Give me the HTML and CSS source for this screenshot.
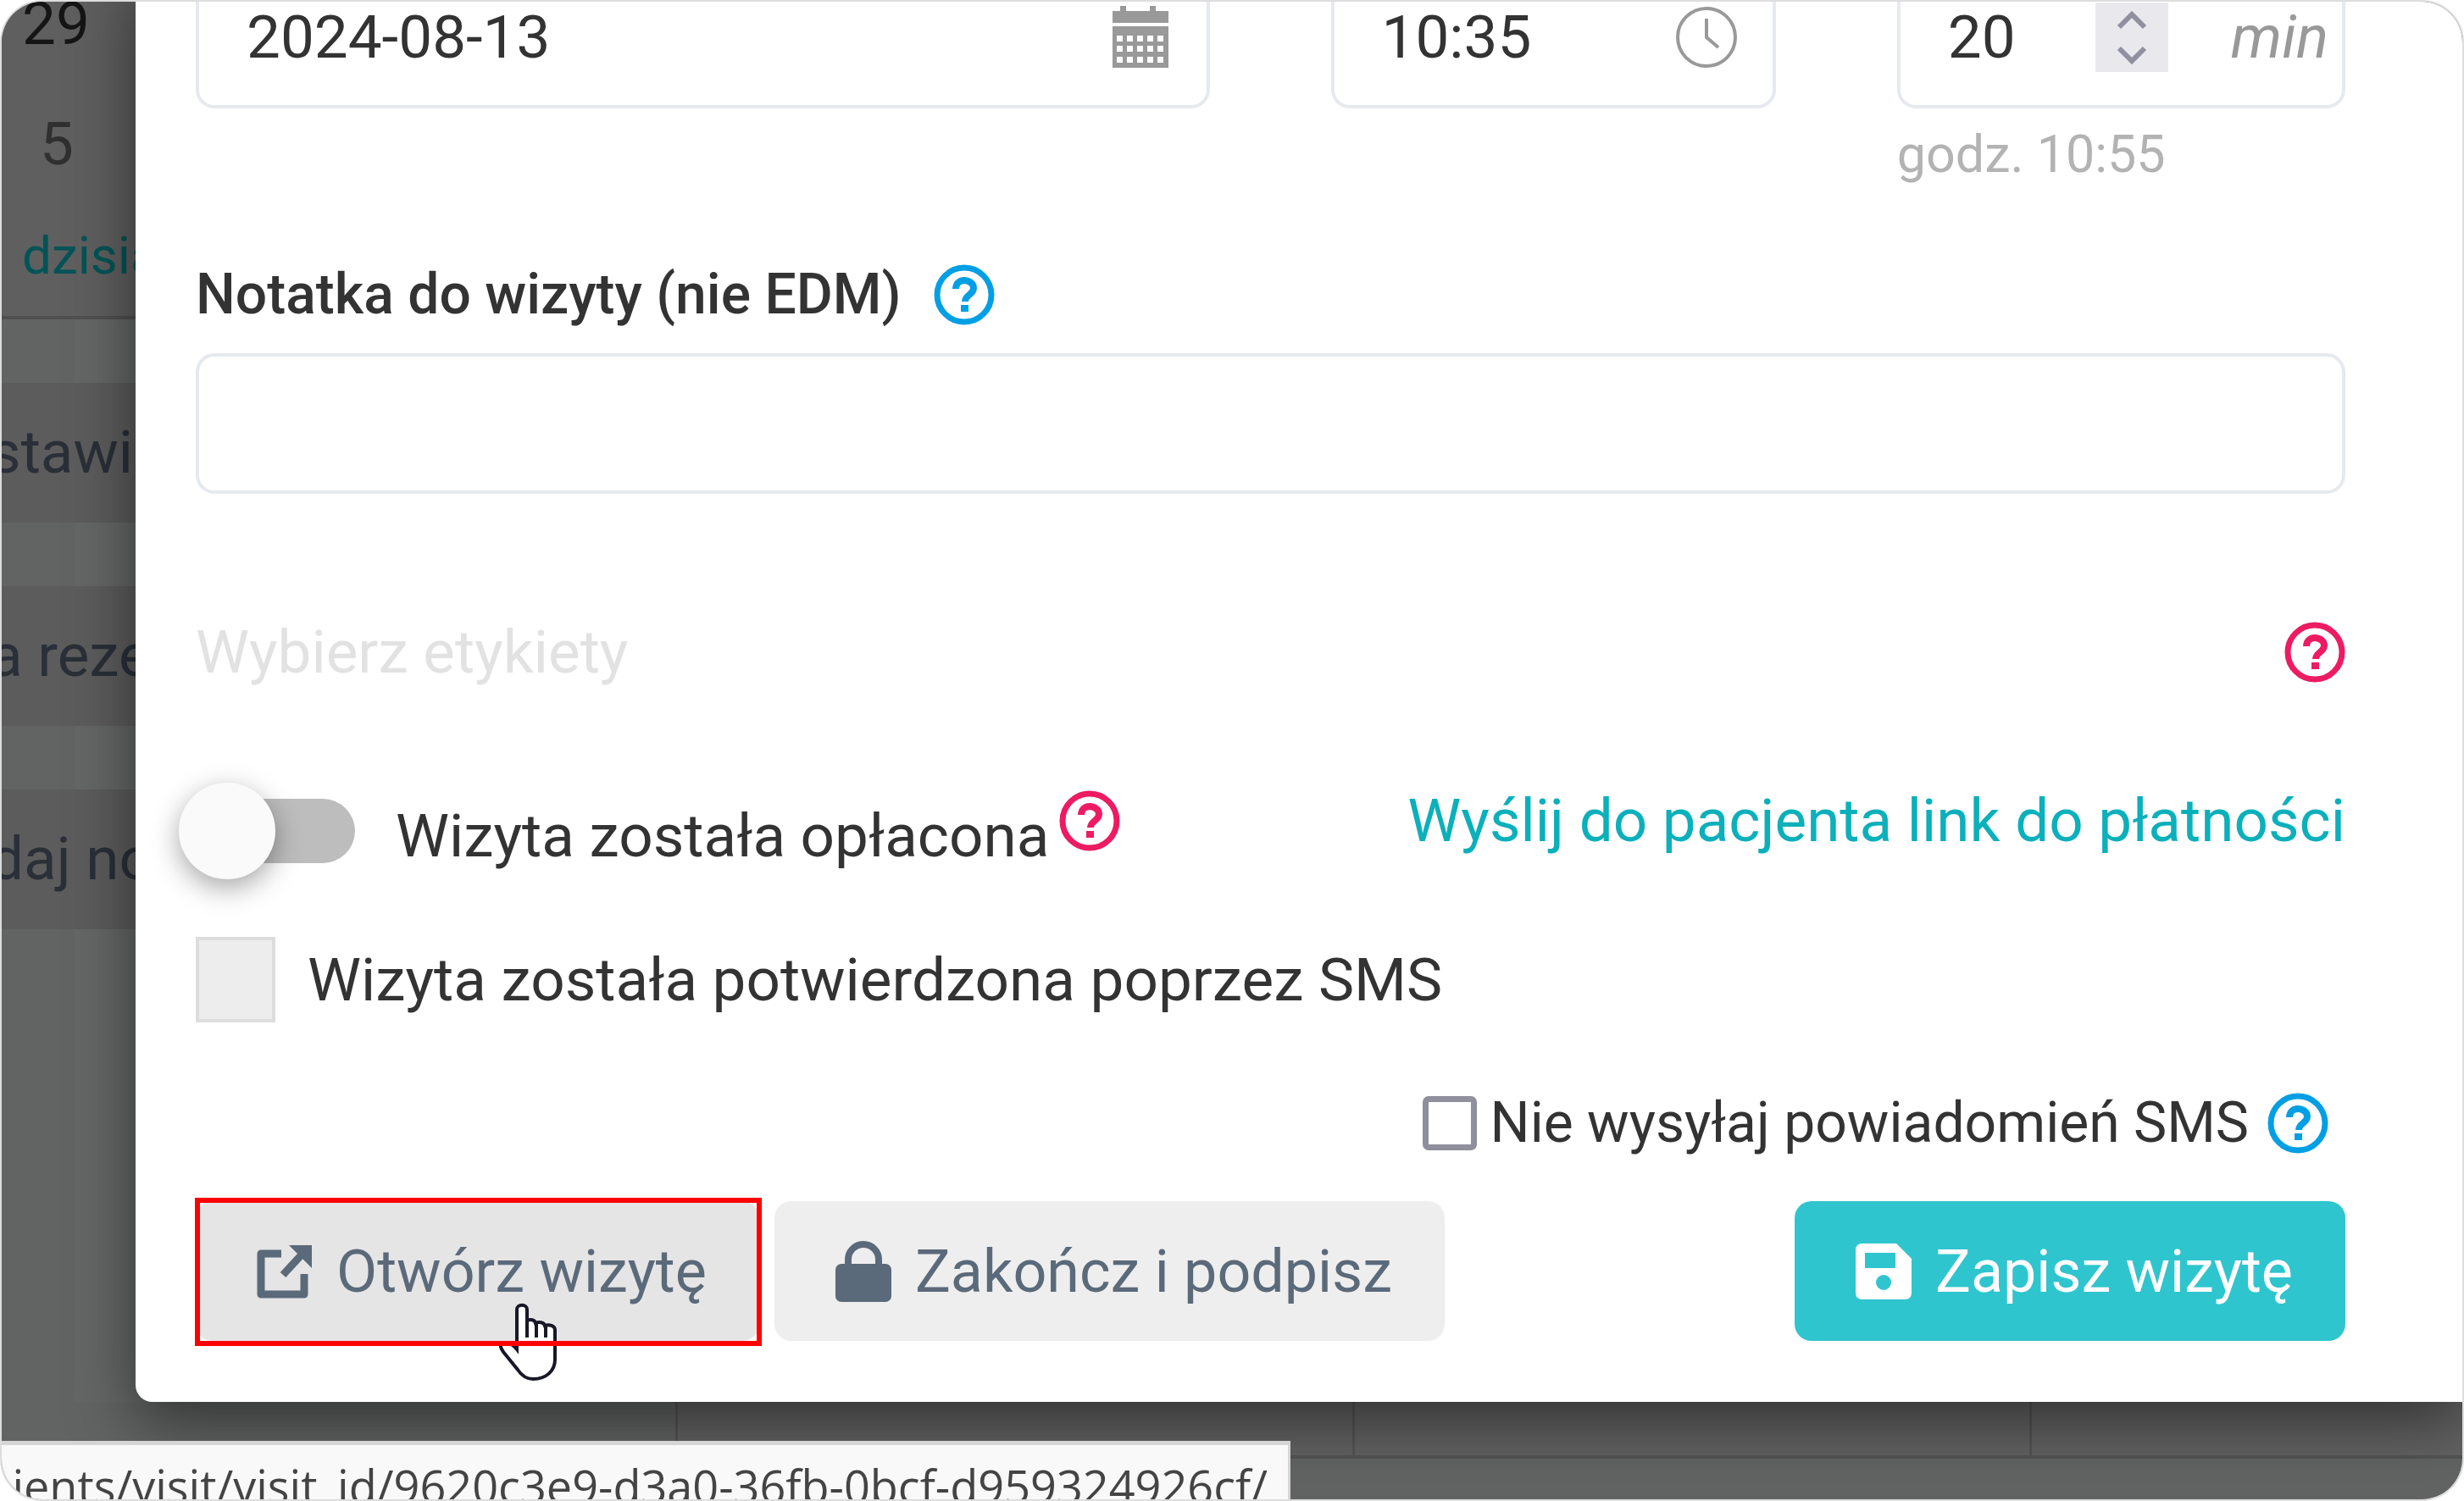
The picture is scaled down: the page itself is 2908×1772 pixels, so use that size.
FILE: index.html
```html
<!DOCTYPE html>
<html lang="pl">
<head>
  <meta charset="UTF-8" />
  <meta name="viewport" content="width=device-width, initial-scale=1" />
  <title>Wizyta</title>
  <link rel="stylesheet" href="styles.css">
</head>
<body>
  <!-- shared icons -->
  <svg class="hidden" aria-hidden="true">
    <symbol id="icon-help" viewBox="0 0 72 72">
      <circle cx="36" cy="36" r="32" fill="none" stroke="currentColor" stroke-width="7" />
      <path d="M26 29c0-6 4-10 10-10s11 4 11 9c0 8-10 8-10 16" fill="none" stroke="currentColor" stroke-width="8" />
      <rect x="32" y="48" width="9" height="8" fill="currentColor" />
    </symbol>
  </svg>

  <div class="page">
    <div class="calendar">
      <aside class="sidebar">
        <div class="day">29</div>
        <div class="day day-next">5</div>
        <a href="#" class="today">dzisiaj</a>
        <div class="side-menu">
          <a href="#" class="side-btn">stawi</a>
          <a href="#" class="side-btn">a reze</a>
          <a href="#" class="side-btn">daj no</a>
        </div>
      </aside>
      <div class="slots">
        <div class="slot"></div>
        <div class="slot"></div>
        <div class="slot"></div>
      </div>
    </div>

    <form class="dialog">
      <div class="fields">
        <div class="field">
          <input type="text" value="2024-08-13" aria-label="Data" />
          <svg class="icon" viewBox="0 0 72 74" aria-hidden="true">
            <path fill="#999" fill-rule="evenodd" d="M12 0h7v6h28V0h7v6h15v14H3V6h9zM3 24h66v49H3zM8 35v7h7v-7zM20 35v7h7v-7zM32 35v7h7v-7zM44 35v7h7v-7zM56 35v7h7v-7zM8 47v7h7v-7zM20 47v7h7v-7zM32 47v7h7v-7zM44 47v7h7v-7zM56 47v7h7v-7zM8 60v7h7v-7zM20 60v7h7v-7zM32 60v7h7v-7zM44 60v7h7v-7zM56 60v7h7v-7z" />
          </svg>
        </div>
        <div class="field">
          <input type="text" value="10:35" aria-label="Godzina" />
          <svg class="icon" viewBox="0 0 72 74" aria-hidden="true">
            <g fill="none" stroke="#999" stroke-width="4">
              <circle cx="36" cy="37" r="34" />
              <path d="M36 15v22l14 12" />
            </g>
          </svg>
        </div>
        <div>
          <div class="field field-length">
            <input type="number" value="20" aria-label="Czas trwania" />
            <div class="stepper">
              <button type="button" aria-label="Więcej">
                <svg viewBox="0 0 36 22"><path d="M3 19L18 4l15 15" fill="none" stroke="#9190a0" stroke-width="6" /></svg>
              </button>
              <button type="button" aria-label="Mniej">
                <svg viewBox="0 0 36 22"><path d="M3 3l15 15L33 3" fill="none" stroke="#9190a0" stroke-width="6" /></svg>
              </button>
            </div>
            <em>min</em>
          </div>
          <div class="hint">godz. 10:55</div>
        </div>
      </div>

      <div class="note-label">
        <label for="note">Notatka do wizyty (nie EDM)</label>
        <svg class="help help-blue"><use href="#icon-help" /></svg>
      </div>
      <input type="text" id="note" class="note" />

      <div class="tags">
        <input type="text" placeholder="Wybierz etykiety" aria-label="Wybierz etykiety" />
        <svg class="help help-pink"><use href="#icon-help" /></svg>
      </div>

      <div class="payment">
        <input type="checkbox" id="paid" class="toggle" />
        <label for="paid">Wizyta została opłacona</label>
        <svg class="help help-pink"><use href="#icon-help" /></svg>
        <a href="#">Wyślij do pacjenta link do płatności</a>
      </div>

      <div class="confirmed">
        <input type="checkbox" id="confirmed" />
        <label for="confirmed">Wizyta została potwierdzona poprzez SMS</label>
      </div>

      <div class="no-sms">
        <input type="checkbox" id="nosms" />
        <label for="nosms">Nie wysyłaj powiadomień SMS</label>
        <svg class="help help-blue"><use href="#icon-help" /></svg>
      </div>

      <div class="actions">
        <div class="highlight">
          <button type="button" class="btn btn-active">
            <svg viewBox="0 0 66 66" aria-hidden="true">
              <path d="M29 12H5v48h51V36M31 37l24-26" fill="none" stroke="currentColor" stroke-width="9" stroke-linejoin="round" />
              <path d="M38 2h27v27z" fill="currentColor" />
            </svg>
            Otwórz wizytę
          </button>
          <svg class="cursor" viewBox="0 0 70 92" aria-hidden="true">
            <path d="M21 55V8c0-7 12-7 12 0v13c4-2 9-1 10 3 4-2 10-1 11 3 5-2 12 0 12 5v35c0 13-10 23-26 23-9 0-14-5-18-11L5 58c-5-7-4-11 3-11 5 0 9 3 13 8z" fill="#fff" stroke="#181828" stroke-width="4" />
            <path d="M33 21v20M44 25v16M55 27v14" stroke="#181828" stroke-width="4" />
          </svg>
        </div>
        <button type="button" class="btn">
          <svg viewBox="0 0 66 72" class="lock" aria-hidden="true">
            <path d="M15 34V22a18 18 0 0 1 36 0v12" fill="none" stroke="currentColor" stroke-width="8" />
            <rect y="27" width="66" height="45" rx="7" fill="currentColor" />
          </svg>
          Zakończ i podpisz
        </button>
        <button type="submit" class="btn btn-save">
          <svg viewBox="0 0 66 66" aria-hidden="true">
            <path fill="currentColor" fill-rule="evenodd" d="M8 0h40l18 18v40q0 8-8 8H8q-8 0-8-8V8q0-8 8-8zM11 11v18h36V11zM33 37a9 9 0 1 0 0 18a9 9 0 0 0 0-18z" />
          </svg>
          Zapisz wizytę
        </button>
      </div>
    </form>

    <!-- browser link preview -->
    <div class="status-bar">ients/visit/visit_id/9620c3e9-d3a0-36fb-0bcf-d959324926cf/</div>
  </div>
</body>
</html>
```
FILE: styles.css
```css
* {
  box-sizing: border-box;
}

body {
  margin: 0;
  background: #fff;
  color: #333;
  font-family: Roboto, "Liberation Sans", sans-serif;
  font-size: 71px;
  line-height: 80px;
}

input,
button {
  margin: 0;
  padding: 0;
  border: none;
  background: none;
  color: inherit;
  font: inherit;
}

button,
a,
label {
  white-space: nowrap;
}

a {
  color: #0bb0bb;
  text-decoration: none;
}

.hidden {
  display: none;
}

/* calendar and dialog share one grid cell */
.page {
  display: grid;
  grid-template-columns: minmax(0, 1fr);
  grid-template-rows: minmax(0, 1fr);
  position: relative;
  height: 100vh;
  border: 2px solid #ddd;
  border-radius: 50px;
  overflow: hidden;
}

.calendar,
.dialog {
  grid-area: 1 / 1;
}

.calendar {
  display: flex;
  background: #616462;
}

/* calendar behind the dialog */
.sidebar {
  flex: none;
  width: 795px;
  margin-top: -45px;
  background: linear-gradient(to right, transparent 86px, #646765 86px) 0 0 / 100% 1699px no-repeat;
}

.day,
.today {
  display: block;
  height: 142px;
  padding-left: 24px;
  line-height: 142px;
  color: #151515;
  background: #5f5f5f;
}

.day-next {
  padding-left: 45px;
  color: #303030;
}

.today {
  height: 136px;
  line-height: 122px;
  font-size: 62px;
  border-bottom: 4px solid #505050;
  color: #005457;
}

.side-menu {
  display: flex;
  flex-direction: column;
  gap: 75px;
  padding-top: 75px;
}

.side-btn {
  height: 165px;
  line-height: 164px;
  background: #5c5c5c;
  color: #2a2f38;
  text-indent: -14px;
}

.slots {
  flex: 1;
  display: grid;
  grid-template-columns: 800fr 800fr 511fr;
  margin-bottom: 48px;
  border-bottom: 4px solid #545454;
  background: #626262;
}

.slot {
  border-left: 3px solid #545454;
}

.dialog {
  align-self: start;
  margin: -40px 0 0 158px;
  padding: 0 138px 72px 71px;
  border-radius: 0 0 0 20px;
  background: #fff;
  box-shadow: 0 22px 76px rgba(0, 0, 0, 0.5);
}

.fields {
  display: grid;
  grid-template-columns: 1196fr 525fr 529fr;
  gap: 143px;
}

.field,
.note {
  height: 166px;
  border: 4px solid #e6e9ee;
  border-radius: 22px;
}

.field {
  display: flex;
  align-items: center;
  padding: 0 42px 2px 56px;
}

.field input {
  flex: 1;
  width: 100%;
  min-width: 0;
}

.icon {
  flex: none;
  width: 72px;
  height: 74px;
}

.field-length {
  padding-right: 16px;
}

.field-length input {
  appearance: textfield;
}

.field-length em {
  margin-left: 74px;
  color: #999;
}

.stepper {
  flex: none;
  display: flex;
  flex-direction: column;
  width: 86px;
  background: #e8e8ed;
}

.stepper button {
  display: flex;
  align-items: center;
  justify-content: center;
  height: 41px;
}

.stepper svg {
  width: 36px;
  height: 22px;
}

.hint {
  margin-top: 18px;
  font-size: 61px;
  line-height: 72px;
  color: #b3b3b3;
}

.help {
  flex: none;
  width: 72px;
  height: 72px;
}

.help-blue {
  color: #039fe5;
}

.help-pink {
  color: #ed1b62;
}

.note-label {
  display: flex;
  align-items: center;
  gap: 38px;
  margin: 90px 0 29px;
  font-size: 66px;
  font-weight: 500;
}

.note {
  width: 100%;
  padding: 0 56px;
  display: block;
}

.tags {
  display: flex;
  align-items: center;
  margin-top: 147px;
}

.tags input {
  flex: 1;
  height: 80px;
}

.tags input::placeholder {
  color: #e2e2e2;
  opacity: 1;
}

.payment {
  display: flex;
  align-items: flex-start;
  height: 114px;
  margin-top: 114px;
}

.payment label {
  margin-left: 48px;
  line-height: 126px;
}

.payment .help {
  margin: 9px 0 0 12px;
}

.payment a {
  margin-left: auto;
  line-height: 90px;
}

/* switch: grey track with a knob that hangs over its left end */
.toggle {
  appearance: none;
  position: relative;
  width: 188px;
  height: 76px;
  margin-top: 19px;
  border-radius: 38px;
  background: #bdbdbd;
}

.toggle::before {
  content: "";
  position: absolute;
  top: -19px;
  left: -20px;
  width: 114px;
  height: 114px;
  border-radius: 50%;
  background: #fafafa;
  box-shadow: 0 10px 32px rgba(0, 0, 0, 0.35);
}

.confirmed {
  display: flex;
  align-items: center;
  gap: 38px;
  margin-top: 68px;
}

.confirmed input {
  appearance: none;
  width: 94px;
  height: 101px;
  border: 4px solid #ddd;
  background: #ededed;
}

.no-sms {
  display: flex;
  align-items: center;
  justify-content: flex-end;
  height: 72px;
  margin-top: 83px;
  padding-right: 20px;
  font-size: 66px;
}

.no-sms input {
  appearance: none;
  width: 64px;
  height: 64px;
  margin-right: 16px;
  border: 7px solid #8f8f9d;
  border-radius: 7px;
}

.no-sms .help {
  margin-left: 22px;
}

.actions {
  display: flex;
  gap: 18px;
  margin-top: 56px;
}

.btn {
  display: flex;
  align-items: center;
  gap: 28px;
  height: 165px;
  padding: 0 62px 0 72px;
  border-radius: 20px;
  background: #eee;
  color: #5b6a7a;
  font-size: 70px;
}

.btn svg {
  width: 66px;
  height: 66px;
}

.btn .lock {
  height: 72px;
}

.btn-active {
  background: #e5e5e5;
}

.btn-save {
  margin-left: auto;
  background: #2fc5ce;
  color: #fff;
}

.highlight {
  position: relative;
}

.highlight::after {
  content: "";
  position: absolute;
  inset: -4px -3px -6px -1px;
  border: 6px solid #f00;
}

.cursor {
  position: absolute;
  top: 120px;
  left: 358px;
  width: 70px;
  height: 92px;
}

.status-bar {
  position: absolute;
  left: 0;
  bottom: 0;
  display: flex;
  justify-content: flex-end;
  width: 1521px;
  height: 69px;
  padding-right: 24px;
  border-top: 5px solid #d5d5d5;
  border-right: 3px solid #d5d5d5;
  background: #f9f9f9;
  color: #444;
  font-family: "Open Sans", "Noto Sans", sans-serif;
  font-size: 54px;
  line-height: 96px;
  white-space: nowrap;
  overflow: hidden;
}
```
